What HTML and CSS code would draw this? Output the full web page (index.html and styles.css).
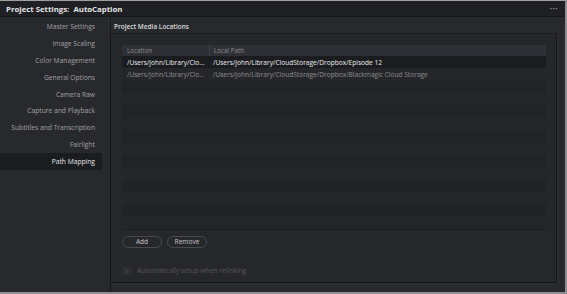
FILE: index.html
```html
<!DOCTYPE html>
<html lang="en">
<head>
    <meta charset="UTF-8">
    <title>Project Settings: AutoCaption</title>
    <link rel="stylesheet" href="styles.css">
</head>
<body>
    <div class="window">
        <div class="title-bar">
            <span class="title">Project Settings:&nbsp; AutoCaption</span>
            <span class="dots">&bull;&bull;&bull;</span>
        </div>

        <div class="window-body">
            <div class="sidebar">
                <div class="side-item">Master Settings</div>
                <div class="side-item">Image Scaling</div>
                <div class="side-item">Color Management</div>
                <div class="side-item">General Options</div>
                <div class="side-item">Camera Raw</div>
                <div class="side-item">Capture and Playback</div>
                <div class="side-item">Subtitles and Transcription</div>
                <div class="side-item">Fairlight</div>
                <div class="side-item active">Path Mapping</div>
            </div>

            <div class="main">
                <div class="section-title">Project Media Locations</div>
                <div class="panel">
                    <div class="table">
                        <div class="table-head">
                            <div class="col-loc">Location</div>
                            <div class="col-path">Local Path</div>
                        </div>
                        <div class="table-body">
                            <div class="row selected">
                                <div class="col-loc">/Users/john/Library/Clo...</div>
                                <div class="col-path">/Users/john/Library/CloudStorage/Dropbox/Episode 12</div>
                            </div>
                            <div class="row">
                                <div class="col-loc">/Users/john/Library/Clo...</div>
                                <div class="col-path">/Users/john/Library/CloudStorage/Dropbox/Blackmagic Cloud Storage</div>
                            </div>
                            <div class="row"></div>
                            <div class="row"></div>
                            <div class="row"></div>
                            <div class="row"></div>
                            <div class="row"></div>
                            <div class="row"></div>
                            <div class="row"></div>
                            <div class="row"></div>
                            <div class="row"></div>
                            <div class="row"></div>
                            <div class="row"></div>
                            <div class="row"></div>
                        </div>
                    </div>

                    <div class="buttons">
                        <button class="pill">Add</button>
                        <button class="pill">Remove</button>
                    </div>

                    <label class="check-row">
                        <span class="checkbox">&#10003;</span>
                        <span>Automatically setup when relinking</span>
                    </label>
                </div>
            </div>
        </div>
    </div>
</body>
</html>
```

FILE: styles.css
```css
body {
    margin: 0;
    background-color: #8f8f91;
    font-family: "Open Sans", "Liberation Sans", sans-serif;
    font-size: 6.7px;
    color: #9a9a9c;
}
.window {
    width: 565px;
    height: 292px;
    background-color: #28292d;
    display: flex;
    flex-direction: column;
    box-sizing: border-box;
    border-top: 1px solid #a0a0a2;
    overflow: hidden;
}
.title-bar {
    height: 15px;
    flex-shrink: 0;
    background-color: #1f2023;
    border-bottom: 1px solid #17181a;
    display: flex;
    align-items: center;
    justify-content: space-between;
    padding: 0 6px;
}
.title {
    font-size: 7.8px;
    font-weight: 700;
    color: #e4e4e6;
}
.dots {
    font-size: 6px;
    letter-spacing: 0.5px;
    color: #9a9a9c;
    padding-right: 1px;
}
.window-body {
    flex: 1;
    display: flex;
}

/* barra lateral */
.sidebar {
    width: 110px;
    flex-shrink: 0;
    padding-top: 1px;
    border-right: 1px solid #18191b;
}
.side-item {
    height: 16.9px;
    line-height: 17.5px;
    text-align: right;
    padding-right: 7px;
    width: 102px;
    box-sizing: border-box;
    color: #a2a2a4;
    white-space: nowrap;
}
.side-item.active {
    background-color: #1b1c1f;
    color: #e6e6e8;
}

/* area principal */
.main {
    flex: 1;
    display: flex;
    flex-direction: column;
    padding-right: 8px;
}
.section-title {
    height: 16px;
    line-height: 19px;
    padding-left: 3px;
    color: #dcdcde;
    font-size: 6.5px;
    font-weight: 600;
}
.panel {
    flex: 1;
    margin-bottom: 9px;
    margin-left: -1px;
    background-color: #26272b;
    border: 1px solid #141517;
    border-top-color: #1a1b1e;
    box-shadow: 1px 1px 0 #303136;
    padding: 11px 10px 0 11px;
    display: flex;
    flex-direction: column;
}
.table {
    height: 184px;
    display: flex;
    flex-direction: column;
    background-color: #222327;
    border-bottom: 1px solid #1b1c1f;
}
.table-head {
    height: 11px;
    flex-shrink: 0;
    display: flex;
    background-color: #2f3035;
    color: #8c8c8f;
    font-size: 6.3px;
    line-height: 11px;
}
.table-head .col-path {
    border-left: 1px solid #3e3f44;
}
.table-body {
    flex: 1;
    display: flex;
    flex-direction: column;
    font-size: 6.6px;
}
.row {
    flex: 1;
    display: flex;
    align-items: center;
    color: #8e8e91;
    white-space: nowrap;
}
.row:nth-child(even) {
    background-color: #25262a;
}
.row.selected {
    background-color: #1b1c1f;
    color: #eeeef0;
}
.col-loc {
    width: 87px;
    flex-shrink: 0;
    padding-left: 5px;
    box-sizing: border-box;
    overflow: hidden;
}
.col-path {
    padding-left: 4px;
}

/* botoes */
.buttons {
    display: flex;
    gap: 5px;
    margin-top: 6px;
}
.pill {
    width: 40px;
    height: 12px;
    padding: 0;
    border: 1px solid #48494e;
    border-radius: 6px;
    background-color: transparent;
    color: #c6c6c8;
    font-family: inherit;
    font-size: 6.6px;
    line-height: 10px;
}
.check-row {
    display: flex;
    align-items: center;
    gap: 5px;
    margin-top: 18px;
    margin-left: 1px;
    color: #56575b;
}
.checkbox {
    width: 9px;
    height: 8px;
    background-color: #2e2f33;
    border-radius: 1px;
    font-size: 6px;
    line-height: 8px;
    text-align: center;
    color: #55565a;
}
```
